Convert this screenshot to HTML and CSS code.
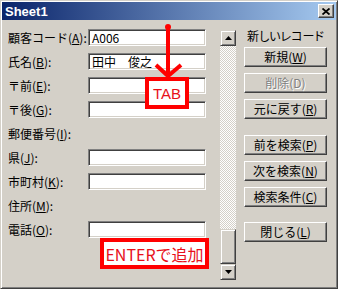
FILE: index.html
```html
<!DOCTYPE html>
<html lang="ja">
<head>
    <meta charset="UTF-8">
    <title>Sheet1</title>
    <link rel="stylesheet" href="styles.css">
</head>
<body>
    <div class="window">
        <div class="titlebar">
            <span class="title">Sheet1</span>
            <span class="close">
                <svg width="8" height="7" viewBox="0 0 8 7">
                    <path d="M0.5 0.5 L7.5 6.5 M7.5 0.5 L0.5 6.5" stroke="#000" stroke-width="1.8"/>
                </svg>
            </span>
        </div>

        <div class="content">
            <div class="fields">
                <label>顧客コード(<u>A</u>):</label>
                <div class="field">A006</div>
                <label>氏名(<u>B</u>):</label>
                <div class="field">田中　俊之</div>
                <label>〒前(<u>E</u>):</label>
                <div class="field"></div>
                <label>〒後(<u>G</u>):</label>
                <div class="field"></div>
                <label>郵便番号(<u>I</u>):</label>
                <div></div>
                <label>県(<u>J</u>):</label>
                <div class="field"></div>
                <label>市町村(<u>K</u>):</label>
                <div class="field"></div>
                <label>住所(<u>M</u>):</label>
                <div></div>
                <label>電話(<u>O</u>):</label>
                <div class="field"></div>
            </div>

            <div class="scrollbar">
                <div class="sb-btn">
                    <svg width="7" height="4" viewBox="0 0 7 4"><path d="M3.5 0 L7 4 L0 4 Z" fill="#000"/></svg>
                </div>
                <div class="sb-track">
                    <div class="sb-thumb"></div>
                </div>
                <div class="sb-btn">
                    <svg width="7" height="4" viewBox="0 0 7 4"><path d="M0 0 L7 0 L3.5 4 Z" fill="#000"/></svg>
                </div>
            </div>

            <div class="actions">
                <div class="caption">新しいレコード</div>
                <div class="btn">新規(<u>W</u>)</div>
                <div class="btn disabled">削除(D)</div>
                <div class="btn">元に戻す(<u>R</u>)</div>
                <div class="btn group">前を検索(<u>P</u>)</div>
                <div class="btn">次を検索(<u>N</u>)</div>
                <div class="btn">検索条件(<u>C</u>)</div>
                <div class="btn group-close">閉じる(<u>L</u>)</div>
            </div>
        </div>

        <!-- annotations -->
        <svg class="arrow" width="32" height="60" viewBox="0 0 32 60">
            <circle cx="15" cy="6" r="3" fill="#f00"/>
            <line x1="15" y1="5" x2="15" y2="54" stroke="#f00" stroke-width="4"/>
            <polyline points="3,44 15,55 28,44" fill="none" stroke="#f00" stroke-width="4"/>
        </svg>
        <div class="note note-tab">TAB</div>
        <div class="note note-enter">ENTERで追加</div>
    </div>
</body>
</html>
```

FILE: styles.css
```css
body {
    margin: 0;
    padding: 0;
    font-family: "Noto Sans CJK JP", sans-serif;
    font-size: 12px;
    color: #000;
    background-color: #d4d0c8;
}

.window {
    position: relative;
    width: 338px;
    height: 289px;
    box-sizing: border-box;
    padding: 1px;
    background-color: #d4d0c8;
    border: 1px solid;
    border-color: #d4d0c8 #404040 #404040 #d4d0c8;
    box-shadow: inset 1px 1px #fff, inset -1px -1px #808080;
}

.titlebar {
    display: flex;
    align-items: center;
    justify-content: space-between;
    height: 18px;
    padding: 0 2px 0 3px;
    background: linear-gradient(to right, #0a246a, #a6caf0);
}

.title {
    color: #fff;
    font-family: "Liberation Sans", Arial, sans-serif;
    font-weight: bold;
    font-size: 13px;
}

.close {
    display: flex;
    align-items: center;
    justify-content: center;
    width: 14px;
    height: 12px;
    background-color: #d4d0c8;
    border: 1px solid;
    border-color: #fff #404040 #404040 #fff;
    box-shadow: inset -1px -1px #808080;
}

.content {
    display: flex;
    align-items: flex-start;
}

.fields {
    display: grid;
    grid-template-columns: 80px 118px;
    grid-auto-rows: 17px;
    row-gap: 7px;
    padding: 9px 0 0 6px;
}

.fields label {
    display: flex;
    align-items: center;
    white-space: nowrap;
    line-height: 14px;
}

.field {
    box-sizing: border-box;
    height: 17px;
    padding: 0 3px;
    background-color: #fff;
    border: 1px solid;
    border-color: #808080 #fff #fff #808080;
    box-shadow: inset 1px 1px #404040, inset -1px -1px #d4d0c8;
    line-height: 15px;
    white-space: nowrap;
}

.scrollbar {
    display: flex;
    flex-direction: column;
    width: 16px;
    height: 250px;
    margin: 10px 0 0 14px;
}

.sb-btn {
    display: flex;
    align-items: center;
    justify-content: center;
    box-sizing: border-box;
    height: 16px;
    background-color: #d4d0c8;
    border: 1px solid;
    border-color: #d4d0c8 #404040 #404040 #d4d0c8;
    box-shadow: inset 1px 1px #fff, inset -1px -1px #808080;
}

.sb-track {
    flex: 1;
    display: flex;
    flex-direction: column;
    justify-content: flex-end;
    background-color: #d4d0c8;
    background-image: conic-gradient(#fff 25%, #d4d0c8 0 50%, #fff 0 75%, #d4d0c8 0);
    background-size: 2px 2px;
}

.sb-thumb {
    box-sizing: border-box;
    height: 35px;
    background-color: #d4d0c8;
    border: 1px solid;
    border-color: #d4d0c8 #404040 #404040 #d4d0c8;
    box-shadow: inset 1px 1px #fff, inset -1px -1px #808080;
}

.actions {
    display: flex;
    flex-direction: column;
    width: 83px;
    margin-left: 8px;
    padding-top: 9px;
}

.caption {
    text-align: center;
    line-height: 14px;
    margin-bottom: 4px;
    white-space: nowrap;
    font-feature-settings: "palt";
}

.btn {
    box-sizing: border-box;
    height: 20px;
    margin-bottom: 6px;
    text-align: center;
    line-height: 17px;
    white-space: nowrap;
    background-color: #d4d0c8;
    border: 1px solid;
    border-color: #fff #404040 #404040 #fff;
    box-shadow: inset -1px -1px #808080;
}

.btn.group {
    margin-top: 10px;
}

.btn.group-close {
    margin-top: 9px;
}

.btn.disabled {
    color: #808080;
    text-shadow: 1px 1px #fff;
}

.arrow {
    position: absolute;
    left: 152px;
    top: 20px;
}

.note {
    position: absolute;
    box-sizing: border-box;
    display: flex;
    align-items: center;
    justify-content: center;
    background-color: #fff;
    border: 4px solid #f00;
    color: #e8101a;
    font-size: 15px;
    white-space: nowrap;
}

.note-tab {
    left: 144px;
    top: 76px;
    width: 44px;
    height: 32px;
    font-family: "Liberation Sans", Arial, sans-serif;
}

.note-enter {
    left: 99px;
    top: 237px;
    width: 109px;
    height: 31px;
    font-size: 16px;
}
```
